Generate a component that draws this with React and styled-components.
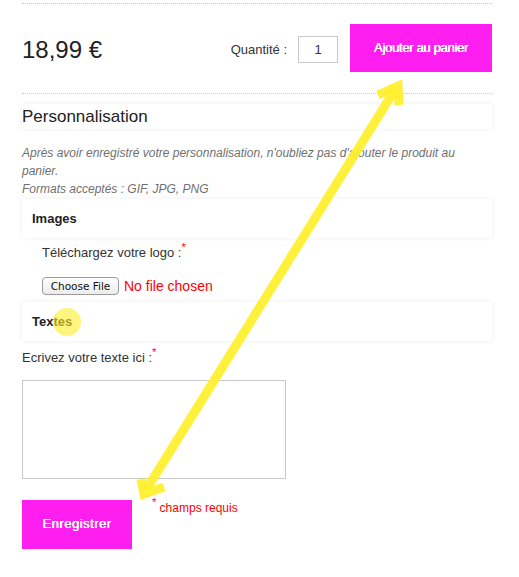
import React from 'react';
import styled, { createGlobalStyle } from 'styled-components';

const Global = createGlobalStyle`
  body {
    margin: 0;
    background: #fff;
    font-family: "Liberation Sans", Arial, sans-serif;
    color: #333;
  }
`;

const Page = styled.div`
  position: relative;
  width: 470px;
  padding: 3px 27px 20px 22px;
`;

const Divider = styled.div`
  border-top: 1px dotted #c8c8c8;
`;

const BuyRow = styled.div`
  display: flex;
  align-items: center;
  height: 48px;
  padding: 20px 0 21px;
`;

const Price = styled.div`
  font-size: 24px;
  color: #222;
  margin-top: 4px;
  flex: 1;
`;

const QtyLabel = styled.label`
  font-size: 13px;
  margin: 3px 11px 0 0;
`;

const QtyInput = styled.input`
  box-sizing: border-box;
  width: 40px;
  height: 27px;
  margin: 3px 12px 0 0;
  border: 1px solid #c8c8c8;
  font: 13px "Liberation Sans", Arial, sans-serif;
  color: #333;
  text-align: center;
  padding: 0;
  outline: none;
`;

const PinkButton = styled.button`
  box-sizing: border-box;
  width: ${(p) => p.$w}px;
  height: ${(p) => p.$h}px;
  background: #ff1ef0;
  border: none;
  color: #fff;
  font: 13px "Liberation Sans", Arial, sans-serif;
  letter-spacing: ${(p) => p.$ls}px;
  text-shadow: 0 0 0.6px #fff, 0.3px 0 0 #fff;
  padding: 0 0 ${(p) => p.$lift || 0}px;
  cursor: pointer;
`;

const Panel = styled.div`
  box-sizing: border-box;
  height: ${(p) => p.$h}px;
  margin-top: ${(p) => p.$mt}px;
  padding-left: ${(p) => p.$pl}px;
  display: flex;
  align-items: center;
  background: #fff;
  box-shadow: 0 0 5px rgba(0, 0, 0, 0.07);
  font-size: ${(p) => p.$fs}px;
  font-weight: ${(p) => (p.$bold ? 'bold' : 'normal')};
  color: #222;
`;

const Note = styled.p`
  margin: 15px 0 0;
  font-size: 12px;
  font-style: italic;
  line-height: 18px;
  color: #707070;
`;

const Field = styled.div`
  padding-left: ${(p) => p.$indent || 0}px;
  margin-top: ${(p) => p.$mt}px;
`;

const FieldLabel = styled.div`
  font-size: 13px;
  color: #333;
`;

const Req = styled.sup`
  color: #f00;
  font-size: 11px;
  line-height: 0;
  vertical-align: 6px;
`;

const FileRow = styled.div`
  display: flex;
  align-items: center;
  gap: 5px;
  margin-top: 17px;
`;

const FileButton = styled.button`
  box-sizing: border-box;
  width: 77px;
  height: 18px;
  padding: 0;
  border: 1px solid #9a9a9a;
  border-radius: 4px;
  background: linear-gradient(#fff, #ececec);
  font: 10.5px "DejaVu Sans", sans-serif;
  color: #111;
`;

const NoFile = styled.span`
  font-size: 14px;
  color: #f00;
`;

const TextBox = styled.textarea`
  display: block;
  box-sizing: border-box;
  width: 264px;
  height: 99px;
  margin-top: 15px;
  border: 1px solid #c8c8c8;
  resize: none;
  outline: none;
`;

const SubmitRow = styled.div`
  display: flex;
  align-items: flex-start;
  gap: 20px;
  margin-top: 21px;
`;

const Required = styled.span`
  font-size: 12px;
  color: #f00;
  margin-top: 1px;
`;

const Overlay = styled.svg`
  position: absolute;
  left: 0;
  top: 0;
  pointer-events: none;
`;

export default function App() {
  return (
    <>
      <Global />
      <Page>
        <Divider />
        <BuyRow>
          <Price>18,99 €</Price>
          <QtyLabel>Quantité :</QtyLabel>
          <QtyInput defaultValue="1" />
          <PinkButton $w={142} $h={48} $lift={2} $ls={-0.3}>Ajouter au panier</PinkButton>
        </BuyRow>
        <Divider />

        <Panel $h={25} $mt={10} $pl={0} $fs={17}>Personnalisation</Panel>
        <Note>
          Après avoir enregistré votre personnalisation, n'oubliez pas d'ajouter le produit au panier.
          <br />
          Formats acceptés : GIF, JPG, PNG
        </Note>

        <Panel $h={39} $mt={1} $pl={10} $fs={13} $bold>Images</Panel>
        <Field $indent={20} $mt={7}>
          <FieldLabel>
            Téléchargez votre logo :<Req>*</Req>
          </FieldLabel>
          <FileRow>
            <FileButton>Choose File</FileButton>
            <NoFile>No file chosen</NoFile>
          </FileRow>
        </Field>

        <Panel $h={39} $mt={7} $pl={10} $fs={13} $bold>Textes</Panel>
        <Field $mt={9}>
          <FieldLabel>
            Ecrivez votre texte ici :<Req>*</Req>
          </FieldLabel>
          <TextBox />
        </Field>

        <SubmitRow>
          <PinkButton $w={110} $h={49} $lift={2} $ls={0.5}>Enregistrer</PinkButton>
          <Required>
            <Req>*</Req> champs requis
          </Required>
        </SubmitRow>

        <Overlay width="519" height="577" viewBox="0 0 519 577">
          <circle cx="67" cy="322" r="14" fill="rgba(255, 236, 40, 0.6)" />
          <g stroke="#fff02a" strokeOpacity="0.92" fill="none" strokeWidth="9" strokeLinejoin="miter">
            <line x1="396" y1="88" x2="146" y2="490" />
            <polyline points="378,95 398,86 399,105" />
            <polyline points="141,479 144,494 164,487" />
          </g>
        </Overlay>
      </Page>
    </>
  );
}
